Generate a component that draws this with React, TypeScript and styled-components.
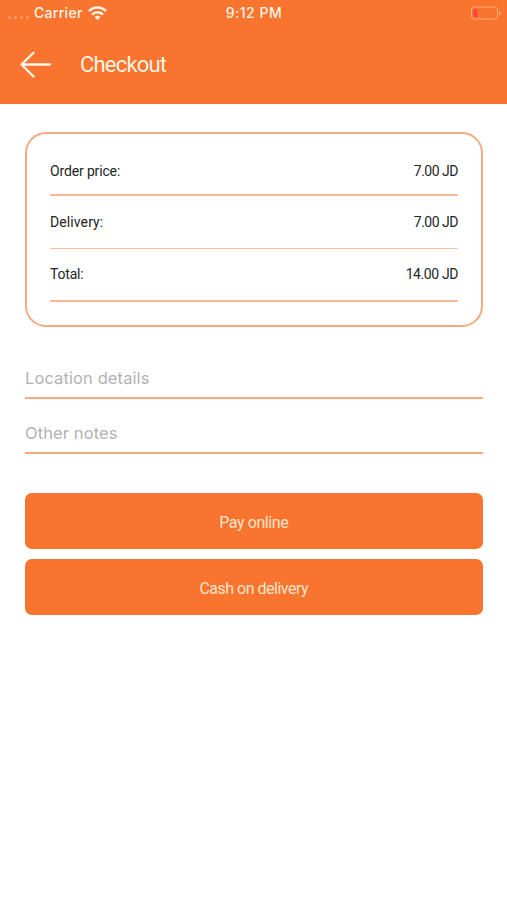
import React from "react";
import styled, { createGlobalStyle } from "styled-components";

const ORANGE = "#f9742e";

const GlobalStyle = createGlobalStyle`
  * { box-sizing: border-box; }
  body { margin: 0; background: #fff; }
`;

const Screen = styled.div`
  width: 507px;
  height: 900px;
  overflow: hidden;
  background: #fff;
  font-family: Roboto, "Noto Sans", sans-serif;
`;

const Header = styled.header`
  height: 103.5px;
  margin-bottom: -0.5px;
  background: ${ORANGE};
  color: #fff3e4;
`;

const StatusBar = styled.div`
  display: grid;
  grid-template-columns: 1fr auto 1fr;
  align-items: center;
  height: 26px;
  padding: 0 6px 0 8px;
  font: 500 14px/26px Inter, sans-serif;
`;

const Carrier = styled.div`
  display: flex;
  align-items: center;
  letter-spacing: 0.3px;
`;

const Dots = styled.div`
  display: flex;
  gap: 3px;
  margin: 9px 5px 0 0;
`;

const Dot = styled.i`
  width: 3px;
  height: 3px;
  border-radius: 50%;
  background: #fba068;
`;

const WifiIcon = styled.svg`
  margin-left: 5px;
`;

const Time = styled.time`
  margin-left: -1px;
  font-size: 14px;
  letter-spacing: 0.5px;
`;

const BatteryIcon = styled.svg`
  justify-self: end;
`;

const TitleBar = styled.div`
  display: flex;
  align-items: center;
  gap: 28px;
  height: 77px;
  padding-left: 20px;
`;

const BackButton = styled.button`
  display: flex;
  padding: 0;
  border: 0;
  background: none;
  color: #fff8ed;
`;

const Title = styled.h1`
  margin: 0;
  padding-top: 1px;
  font-size: 22px;
  font-weight: 400;
  line-height: 30px;
  letter-spacing: -0.8px;
`;

const Content = styled.main`
  display: flex;
  flex-direction: column;
  padding: 29px 24.5px 0 25px;
`;

const Summary = styled.section`
  height: 195px;
  padding: 13px 22.5px 0 23px;
  border: 2px solid #f7a97f;
  border-radius: 21px;
`;

const SummaryRow = styled.div<{ $height: number; $thin?: boolean }>`
  display: flex;
  justify-content: space-between;
  align-items: flex-start;
  height: ${(p) => p.$height}px;
  padding-top: ${(p) => p.$height - 35}px;
  border-bottom: ${(p) => (p.$thin ? "1px solid #f9c09c" : "2px solid #f9b995")};
  color: #252525;
  font-size: 14px;
  line-height: 20px;
`;

const DeliveryRow = styled(SummaryRow)`
  padding-top: 16px;
`;

const TotalRow = styled(SummaryRow)`
  padding-top: 15px;
`;

const Label = styled.span<{ $spacing: number }>`
  letter-spacing: ${(p) => p.$spacing}px;
`;

const Fields = styled.div`
  display: flex;
  flex-direction: column;
  padding-top: 31px;
`;

const Field = styled.input`
  height: 41px;
  margin-bottom: 14px;
  padding: 0;
  border: 0;
  border-bottom: 2px solid #f7a97b;
  border-radius: 0;
  outline: 0;
  background: transparent;
  font: 400 16.5px/24px Inter, sans-serif;
  letter-spacing: 0.1px;
  &::placeholder { color: #b2b2b2; opacity: 1; }
`;

const Actions = styled.div`
  display: flex;
  flex-direction: column;
  gap: 10px;
  padding-top: 25px;
`;

const ActionButton = styled.button<{ $spacing: number }>`
  height: 56px;
  padding: 3px 0 0;
  border: 0;
  border-radius: 7px;
  background: ${ORANGE};
  color: #ffe5cb;
  font: 400 16px/22px Roboto, sans-serif;
  letter-spacing: ${(p) => p.$spacing}px;
`;

export default function App() {
  return (
    <Screen>
      <GlobalStyle />
      <Header>
        <StatusBar>
          <Carrier>
            <Dots><Dot /><Dot /><Dot /><Dot /></Dots>
            Carrier
            <WifiIcon width="19" height="14" viewBox="0 0 19 14" fill="none" stroke="currentColor" strokeWidth="2.6">
              <path d="M1 5.1C5.8.3 13.2.3 18 5.1" />
              <path d="M4 8.6c3.1-3.1 7.9-3.1 11 0" />
              <path d="M9.5 14 6.5 11c1.6-1.7 4.4-1.7 6 0Z" fill="currentColor" stroke="none" />
            </WifiIcon>
          </Carrier>
          <Time>9:12 PM</Time>
          <BatteryIcon width="31" height="14" viewBox="0 0 31 14">
            <rect x="1.5" y="1" width="26" height="12" rx="3" fill="none" stroke="#ffac78" />
            <rect x="3.5" y="3" width="4" height="8" rx="1" fill="#ff463b" />
            <path d="M29 5c2 .4 2 3.6 0 4Z" fill="#ffb17c" />
          </BatteryIcon>
        </StatusBar>
        <TitleBar>
          <BackButton aria-label="Back">
            <svg width="32" height="28" viewBox="0 0 32 28" fill="none" stroke="currentColor" strokeWidth="2.3" strokeLinecap="round" strokeLinejoin="round">
              <path d="M13.5 1.8 1.5 13.5l12 12M1.5 13.5h28.5" />
            </svg>
          </BackButton>
          <Title>Checkout</Title>
        </TitleBar>
      </Header>
      <Content>
        <Summary>
          <SummaryRow $height={49}>
            <Label $spacing={-0.15}>Order price:</Label>
            <Label $spacing={-0.5}>7.00 JD</Label>
          </SummaryRow>
          <DeliveryRow $height={53} $thin>
            <Label $spacing={0.1}>Delivery:</Label>
            <Label $spacing={-0.5}>7.00 JD</Label>
          </DeliveryRow>
          <TotalRow $height={53}>
            <Label $spacing={-0.2}>Total:</Label>
            <Label $spacing={-0.4}>14.00 JD</Label>
          </TotalRow>
        </Summary>
        <Fields>
          <Field placeholder="Location details" />
          <Field placeholder="Other notes" />
        </Fields>
        <Actions>
          <ActionButton $spacing={-0.4}>Pay online</ActionButton>
          <ActionButton $spacing={-0.5}>Cash on delivery</ActionButton>
        </Actions>
      </Content>
    </Screen>
  );
}
